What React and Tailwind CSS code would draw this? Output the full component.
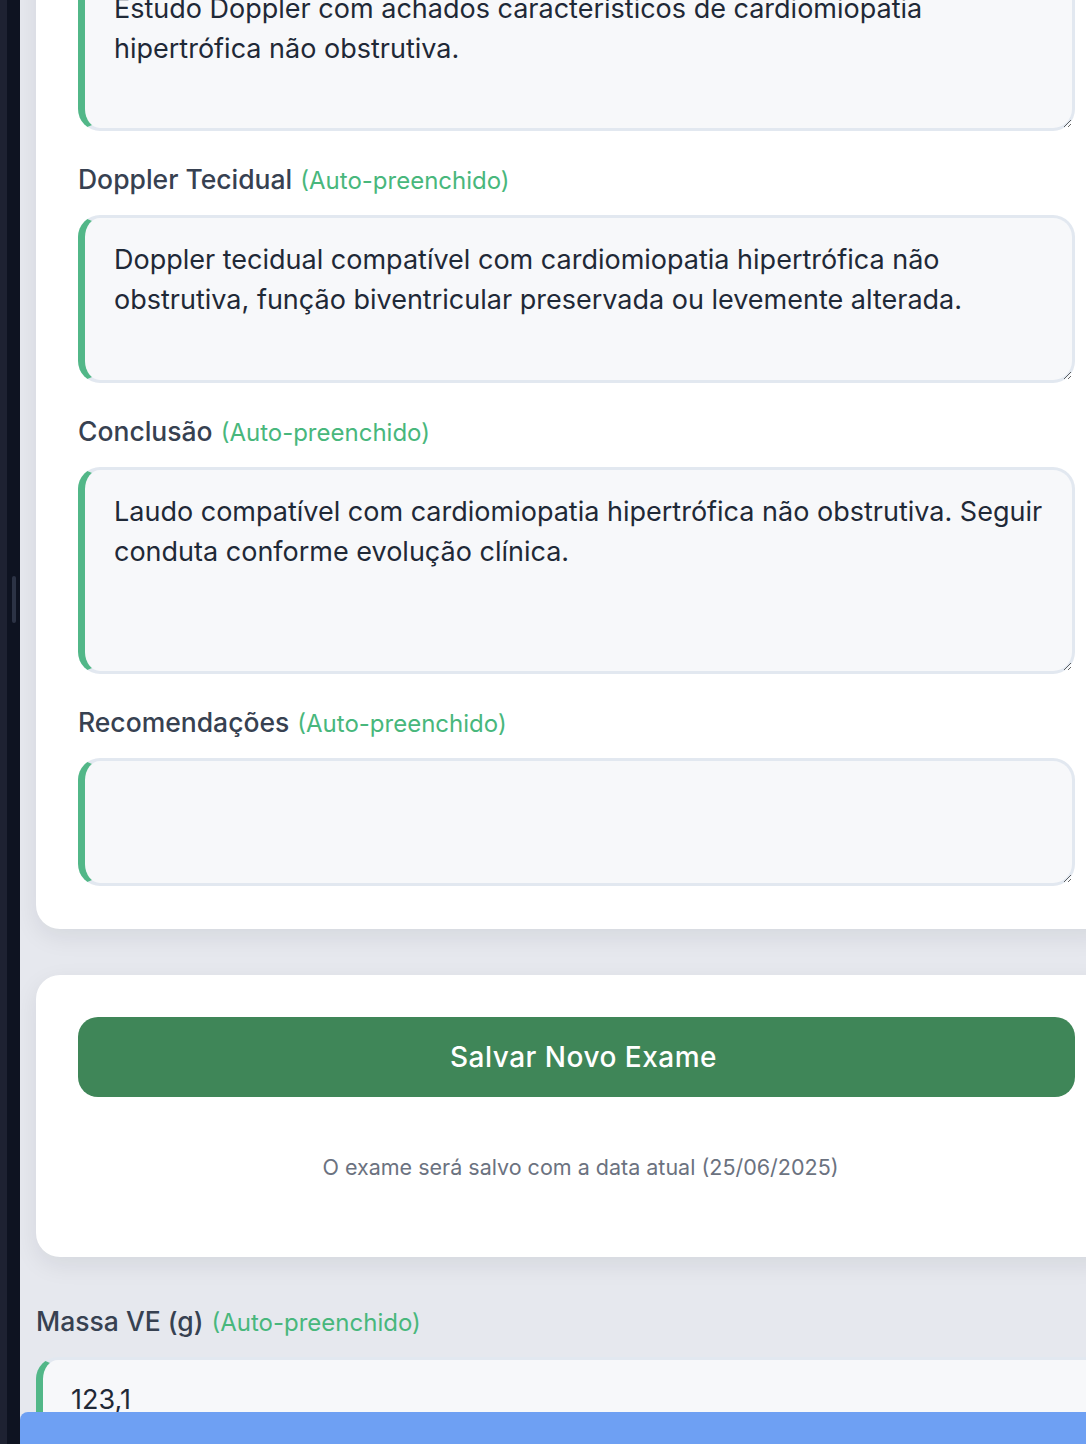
import React from 'react';

const font = { fontFamily: 'Inter, "Noto Sans", sans-serif' };

// Auto-filled fields of the report form
const fields = [
  {
    label: 'Doppler Tecidual',
    value:
      'Doppler tecidual compatível com cardiomiopatia hipertrófica não obstrutiva, função biventricular preservada ou levemente alterada.',
    h: 'h-[168px]',
  },
  {
    label: 'Conclusão',
    value:
      'Laudo compatível com cardiomiopatia hipertrófica não obstrutiva. Seguir conduta conforme evolução clínica.',
    h: 'h-[207px]',
  },
  {
    label: 'Recomendações',
    value: '',
    h: 'h-[128px]',
  },
];

const areaClass =
  'block w-full resize-y rounded-[22px] border-[3px] border-l-[7px] border-[#e2e8f0] border-l-[#52b788] bg-[#f7f8fa] pl-[29px] pr-[20px] pt-[22px] text-[27px] leading-[40px] text-[#1f2937] outline-none';

const Label = ({ children }) => (
  <div className="mb-[17px] flex h-[37px] items-baseline gap-[8px] text-[26.5px] leading-[37px] font-medium text-[#374151]">
    <span>{children}</span>
    <span className="text-[24px] font-normal text-[#48b77c]">(Auto-preenchido)</span>
  </div>
);

export default function App() {
  return (
    <div className="relative flex h-[1444px] overflow-hidden bg-[#e6e8ee]" style={font}>
      {/* Sidebar edge */}
      <div className="relative flex w-[20px] shrink-0">
        <div className="w-[7px] bg-[#1e2232]" />
        <div className="flex-1 bg-[#0e1321]" />
        <div className="absolute left-[12px] top-[576px] h-[47px] w-[4px] rounded-full bg-[#2c3345]" />
      </div>

      <main className="w-[1097px] shrink-0 pl-[16px]">
        {/* Report card */}
        <div className="-mt-[78px] w-[1081px] rounded-3xl bg-white px-[42px] pt-[42px] pb-[43px] shadow-[0_8px_24px_rgba(15,23,42,0.08)]">
          <div className="mb-[30px]">
            <textarea
              className={`${areaClass} h-[167px]`}
              defaultValue="Estudo Doppler com achados característicos de cardiomiopatia hipertrófica não obstrutiva."
            />
          </div>
          {fields.map((f, i) => (
            <div key={f.label} className={i < fields.length - 1 ? 'mb-[30px]' : ''}>
              <Label>{f.label}</Label>
              <textarea className={`${areaClass} ${f.h}`} defaultValue={f.value} />
            </div>
          ))}
        </div>

        {/* Save card */}
        <div className="mt-[46px] flex h-[282px] w-[1081px] flex-col rounded-3xl bg-white px-[42px] pt-[42px] shadow-[0_8px_24px_rgba(15,23,42,0.08)]">
          <button className="h-[80px] w-full rounded-[20px] bg-[#3f8658] pl-[14px] text-[28px] font-medium tracking-[0.5px] text-white">
            Salvar Novo Exame
          </button>
          <p className="mt-[55px] pl-[8px] text-center text-[21.5px] leading-[30px] text-[#6b7280]">
            O exame será salvo com a data atual (25/06/2025)
          </p>
        </div>

        {/* Next field */}
        <div className="mt-[46px] w-[1081px]">
          <Label>Massa VE (g)</Label>
          <input
            className="block h-[84px] w-full rounded-[22px] border-[3px] border-l-[7px] border-[#e2e8f0] border-l-[#52b788] bg-[#f7f8fa] px-[28px] text-[27px] text-[#1f2937] outline-none"
            defaultValue="123,1"
          />
        </div>
      </main>

      {/* Bottom bar */}
      <div className="absolute bottom-0 left-[20px] right-0 h-[32px] rounded-tl-lg bg-[#6ea0f3]" />
    </div>
  );
}
